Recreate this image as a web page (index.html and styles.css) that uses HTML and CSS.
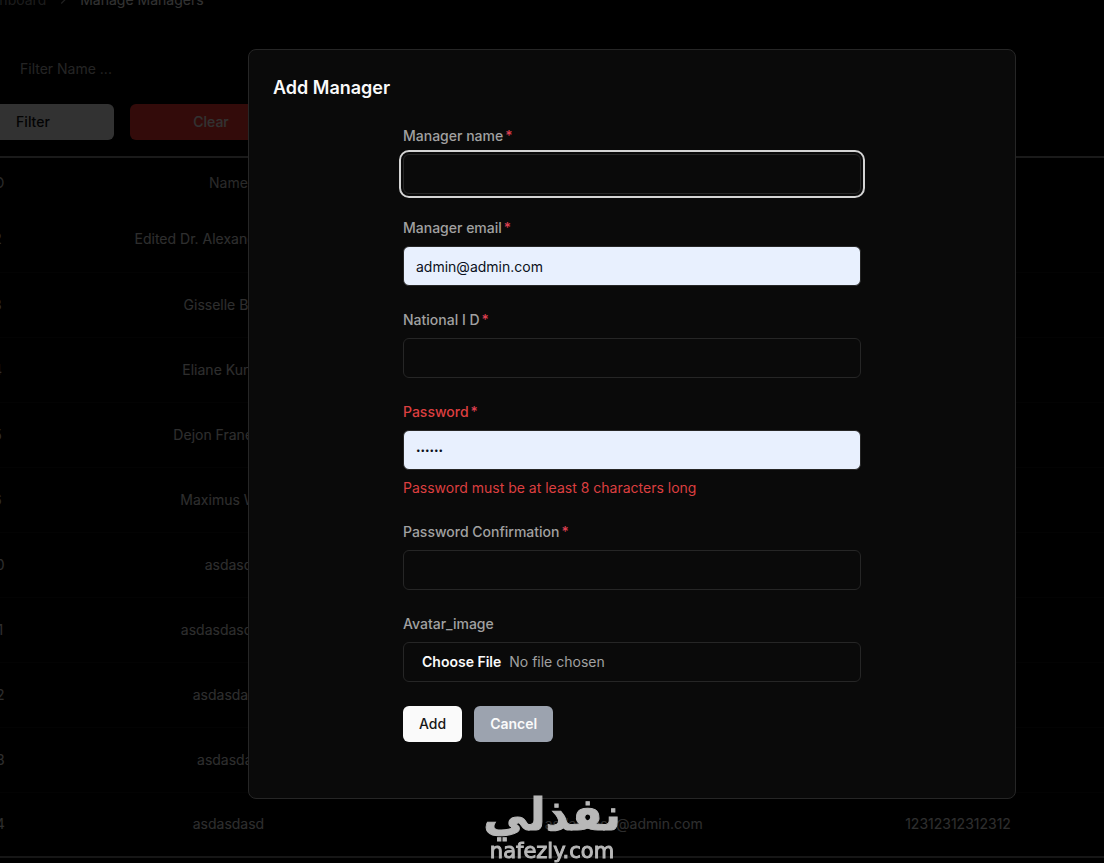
FILE: index.html
```
<!DOCTYPE html>
<html lang="en">
<head>
<meta charset="utf-8">
<title>Manage Managers</title>
<link rel="stylesheet" href="styles.css">
</head>
<body>
<main class="page">
  <nav class="breadcrumb" aria-label="Breadcrumb">
    <a class="crumb" href="#">Dashboard</a>
    <svg class="chevron" viewBox="0 0 24 24" aria-hidden="true"><path d="m9 18 6-6-6-6"/></svg>
    <span class="crumb-current">Manage Managers</span>
  </nav>
  <input class="filter-input" type="text" placeholder="Filter Name ..." aria-label="Filter name">
  <div class="filter-actions">
    <button class="filter-btn" type="button">Filter</button>
    <button class="filter-btn filter-clear" type="button">Clear</button>
  </div>
  <table class="managers">
    <colgroup><col class="col-id"><col class="col-name"><col class="col-email"><col class="col-national"><col></colgroup>
    <thead><tr><th>ID</th><th>Name</th><th></th><th></th><th></th></tr></thead>
    <tbody>
      <tr><td>2</td><td>Edited Dr. Alexandre Schmid</td><td></td><td></td><td></td></tr>
      <tr><td>3</td><td>Gisselle Beier</td><td></td><td></td><td></td></tr>
      <tr><td>4</td><td>Eliane Kunze I</td><td></td><td></td><td></td></tr>
      <tr><td>5</td><td>Dejon Franecki II</td><td></td><td></td><td></td></tr>
      <tr><td>6</td><td>Maximus Wiza</td><td></td><td></td><td></td></tr>
      <tr><td>10</td><td>asdasd</td><td></td><td></td><td></td></tr>
      <tr><td>11</td><td>asdasdasdasd</td><td></td><td></td><td></td></tr>
      <tr><td>12</td><td>asdasdasd</td><td></td><td></td><td></td></tr>
      <tr><td>13</td><td>asdasdas</td><td></td><td></td><td></td></tr>
      <tr><td>14</td><td>asdasdasd</td><td>asdasdasd@admin.com</td><td>12312312312312</td><td></td></tr>
    </tbody>
  </table>
</main>

<div class="overlay">
  <section class="dialog" role="dialog" aria-modal="true" aria-labelledby="dialog-title">
    <h2 class="dialog-title" id="dialog-title">Add Manager</h2>
    <form class="form">
      <div class="field">
        <label class="label" for="name">Manager name<span class="required">*</span></label>
        <input class="input input-focus" id="name" type="text">
      </div>
      <div class="field">
        <label class="label" for="email">Manager email<span class="required">*</span></label>
        <input class="input input-filled" id="email" type="email" value="admin@admin.com">
      </div>
      <div class="field">
        <label class="label" for="national">National I D<span class="required">*</span></label>
        <input class="input" id="national" type="text">
      </div>
      <div class="field">
        <label class="label label-error" for="password">Password<span class="required">*</span></label>
        <input class="input input-filled input-secret" id="password" type="password" value="secret" aria-describedby="password-error">
        <p class="error" id="password-error">Password must be at least 8 characters long</p>
      </div>
      <div class="field">
        <label class="label" for="confirm">Password Confirmation<span class="required">*</span></label>
        <input class="input" id="confirm" type="password">
      </div>
      <div class="field">
        <label class="label" for="avatar">Avatar_image</label>
        <input class="input input-file" id="avatar" type="file">
      </div>
      <div class="actions">
        <button class="btn btn-primary" type="submit">Add</button>
        <button class="btn btn-cancel" type="button">Cancel</button>
      </div>
    </form>
  </section>
</div>

<div class="watermark">
  <span class="watermark-ar" lang="ar" dir="rtl">نفذلي</span>
  <span class="watermark-en">nafezly.com</span>
</div>
</body>
</html>
```
FILE: styles.css
```
* { box-sizing: border-box; }

body {
  margin: 0;
  min-height: 100vh;
  overflow: hidden;
  background: #000;
  color: #fafafa;
  font-family: Inter, "Liberation Sans", sans-serif;
  font-size: 14px;
  line-height: 20px;
}

button, input { font: inherit; }

/* The page continues past the left and top window edges. */
.page {
  margin: -10px 0 0 -112px;
}

.breadcrumb {
  display: flex;
  align-items: center;
  gap: 10px;
  padding-left: 86px;
}
.crumb { color: #8a8a8a; text-decoration: none; }
.crumb-current { color: #fafafa; }
.chevron {
  width: 14px;
  height: 14px;
  fill: none;
  stroke: #a1a1a1;
  stroke-width: 2;
}

.filter-input {
  display: block;
  width: 300px;
  height: 36px;
  margin: 40px 0 18px 120px;
  padding: 0 12px;
  border: 0;
  background: transparent;
  color: #fafafa;
}
.filter-input::placeholder { color: #b4b4b4; opacity: 1; }

.filter-actions {
  display: flex;
  gap: 16px;
  margin-left: 64px;
}
.filter-btn {
  width: 162px;
  height: 36px;
  border: 0;
  border-radius: 6px;
  background: #fafafa;
  color: #101010;
  font-weight: 500;
}
.filter-clear { background: #ff3a34; color: #fafafa; }

.managers {
  width: 100%;
  margin-top: 16px;
  border-top: 2px solid #808080;
  border-bottom: 2px solid #707070;
  border-collapse: collapse;
  table-layout: fixed;
  text-align: center;
  white-space: nowrap;
}
.col-id { width: 18%; }
.col-name { width: 20%; }
.col-email { width: 45%; }
.col-national { width: 10%; }
.managers th { height: 50px; padding: 0; color: #d0d0d0; font-weight: 400; }
.managers td { height: 65px; padding: 0; color: #e4e4e4; border-bottom: 1px solid #101010; }
.managers tr:last-child td { border-bottom: 0; }

.overlay {
  position: fixed;
  inset: 0;
  display: flex;
  justify-content: center;
  align-items: flex-start;
  padding: 49px 0 0 160px;
  background: rgba(0, 0, 0, 0.8);
}
.dialog {
  width: 100%;
  max-width: 768px;
  padding: 24px 24px 56px;
  border: 1px solid #262626;
  border-radius: 8px;
  background: #0a0a0a;
}
.dialog-title {
  margin: 0 0 24px;
  font-size: 18px;
  font-weight: 600;
  line-height: 28px;
}

.form {
  display: flex;
  flex-direction: column;
  gap: 24px;
  max-width: 458px;
  margin: 0 auto;
}
.field {
  display: flex;
  flex-direction: column;
  gap: 8px;
}
.label { color: #a1a1a1; font-weight: 500; }
.label-error { color: #dc3f40; }
.required { margin-left: 2px; color: #dc3f50; }
.error { margin: 0; color: #dc3f40; }

.input {
  width: 100%;
  height: 40px;
  padding: 0 12px;
  border: 1px solid #262626;
  border-radius: 6px;
  background: #0a0a0a;
  color: #fafafa;
}
.input-focus { outline: 2px solid #d4d4d4; outline-offset: 2px; }
.input-filled { background: #e8f0fe; color: #0b1020; }
.input-secret { font-size: 8px; }
.input-file { padding: 9px 12px; color: #a1a1a1; }
.input-file::file-selector-button {
  margin: 0 2px 0 0;
  padding: 0 6px;
  border: 0;
  background: transparent;
  color: #fafafa;
  font: inherit;
  font-weight: 600;
}

.actions { display: flex; gap: 12px; }
.btn {
  height: 36px;
  padding: 0 16px;
  border: 0;
  border-radius: 6px;
}
.btn-primary { background: #fafafa; color: #171717; font-weight: 500; }
.btn-cancel { background: #9ca3af; color: #fafafa; font-weight: 600; }

.watermark {
  position: fixed;
  left: 50%;
  bottom: 0;
  display: flex;
  flex-direction: column;
  align-items: center;
  transform: translateX(-50%);
  color: #b8b8b8;
  pointer-events: none;
}
.watermark-ar {
  font-family: "DejaVu Sans", sans-serif;
  font-size: 45px;
  font-weight: 700;
  line-height: 48px;
  -webkit-text-stroke: 1px #b8b8b8;
}
.watermark-en {
  font-family: "DejaVu Sans", sans-serif;
  font-size: 21px;
  line-height: 24px;
  -webkit-text-stroke: 1px #b8b8b8;
}
```
